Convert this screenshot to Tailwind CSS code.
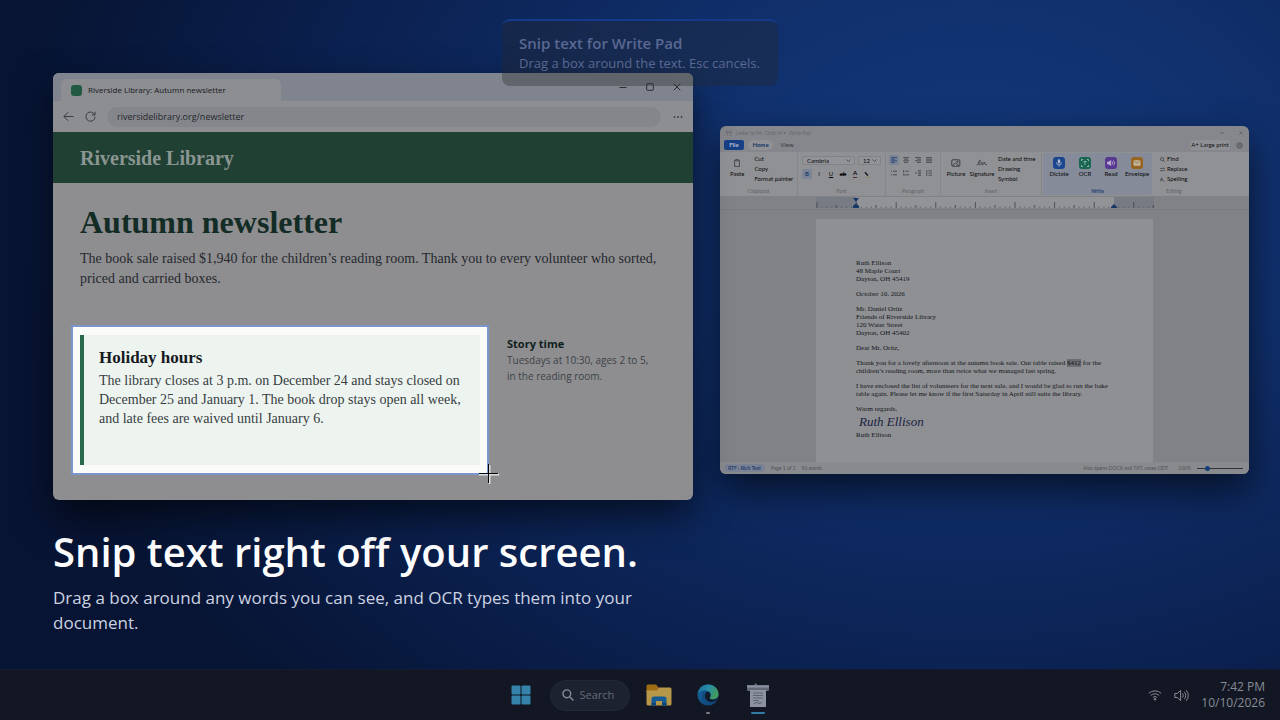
<!DOCTYPE html>
<html lang="en">
  <head>
    <meta charset="UTF-8" />
    <meta name="viewport" content="width=device-width, initial-scale=1.0" />
    <title>Write Pad - Snip text</title>
    <script src="https://cdn.jsdelivr.net/npm/@tailwindcss/browser@4"></script>
  </head>
  <body class="relative flex min-h-screen flex-col overflow-x-hidden bg-[#0a1e4c] bg-[radial-gradient(ellipse_75%_100%_at_76%_28%,#12387a_0%,#102f6b_35%,#0b2150_68%,#071433_100%)] font-['Open_Sans',sans-serif]">
    <main class="flex flex-1 items-start gap-[27px] pt-[73px] pr-[31px] pl-[53px]">
      <div class="w-[50vw] shrink-0">
        <!-- browser -->
        <section class="relative overflow-hidden rounded-md bg-[#8e8e90] shadow-[0_16px_36px_rgba(0,0,0,0.6)]" aria-label="Browser">
          <div class="flex h-7 items-end bg-[#80848e] pl-2">
            <div class="flex h-[22px] w-[220px] items-center gap-1.5 rounded-t-md bg-[#8d8e91] pl-[10px]">
              <span class="size-[11px] rounded-[3px] bg-[#225a41]"></span>
              <span class="text-[8px] text-[#17191e]">Riverside Library: Autumn newsletter</span>
            </div>
            <div class="mr-3 mb-[10px] ml-auto flex items-center gap-[19px] text-[#2a2d34]">
              <button aria-label="Minimize"><svg class="size-2" viewBox="0 0 8 8" fill="none" stroke="currentColor"><path d="M.5 4.5h7" /></svg></button>
              <button aria-label="Maximize"><svg class="size-2" viewBox="0 0 8 8" fill="none" stroke="currentColor"><rect x=".7" y=".7" width="6.6" height="6.6" rx=".8" /></svg></button>
              <button aria-label="Close"><svg class="size-2" viewBox="0 0 8 8" fill="none" stroke="currentColor"><path d="M.7.7l6.6 6.6M7.3.7L.7 7.3" /></svg></button>
            </div>
          </div>
          <div class="flex h-[31px] items-center bg-[#8d8e91] pr-[10px] pl-[10px] text-[#3a3d43]">
            <button aria-label="Back"><svg class="size-[11px]" viewBox="0 0 11 11" fill="none" stroke="currentColor"><path d="M10.500 5.500H1M5 1.300L.9 5.500 5 9.700" /></svg></button>
            <button class="ml-[11px]" aria-label="Reload"><svg class="size-[11px]" viewBox="0 0 11 11" fill="none" stroke="currentColor"><path d="M9.800 4A4.600 4.600 0 1 0 10.100 5.800M10 .8V4H6.800" /></svg></button>
            <input class="ml-[11px] h-5 min-w-0 flex-1 rounded-full bg-[#85868b] px-[10px] text-[9px] text-[#24262c] outline-none" aria-label="Address" value="riversidelibrary.org/newsletter" />
            <button class="ml-3" aria-label="More"><svg class="h-2 w-[10px]" viewBox="0 0 10 8" fill="currentColor"><circle cx="1.500" cy="4" r=".9" /><circle cx="5" cy="4" r=".9" /><circle cx="8.500" cy="4" r=".9" /></svg></button>
          </div>
          <header class="flex h-[51px] items-center bg-[#1f4033] pl-[27px] font-['Liberation_Serif',serif] text-[20px] font-bold text-[#8b9592]">Riverside Library</header>
          <div class="px-[27px] pt-[19px] pb-[35px] font-['Liberation_Serif',serif] text-[#25282d]">
            <h1 class="text-[32px] leading-10 font-bold text-[#132c25]">Autumn newsletter</h1>
            <p class="mt-[7px] text-[14px] leading-5">The book sale raised $1,940 for the children’s reading room. Thank you to every volunteer who sorted, priced and carried boxes.</p>
            <div class="mt-[46px] flex gap-[27px]">
              <!-- snipped area -->
              <div class="relative h-[130px] w-[400px] shrink-0">
                <div class="absolute -inset-x-[9px] -inset-y-[10px] border-2 border-[#7c95cf] bg-[#fbfcfa]"></div>
                <div class="relative h-full border-l-4 border-[#2a6949] bg-[#edf4f0] pt-3 pl-[15px]">
                  <h2 class="text-[17px] leading-[22px] font-bold text-[#16191d]">Holiday hours</h2>
                  <p class="pt-0.5 text-[14px] leading-[19px] text-[#383d42]">The library closes at 3 p.m. on December 24 and stays closed on December 25 and January 1. The book drop stays open all week, and late fees are waived until January 6.</p>
                </div>
                <svg class="absolute -right-[19px] -bottom-[19px] size-5" viewBox="0 0 20 20" fill="none"><path d="M0 10.500h20M10.500 1v19" stroke="#fff" stroke-width="2" opacity=".7" /><path d="M0 9.500h19M9.500 0v19" stroke="#000" /></svg>
              </div>
              <aside class="font-['Open_Sans',sans-serif] text-[10px] leading-4 whitespace-nowrap text-[#3d4147]">
                <h3 class="text-[11px] leading-[17px] font-bold text-[#101f1c]">Story time</h3>
                <p>Tuesdays at 10:30, ages 2 to 5,<br />in the reading room.</p>
              </aside>
            </div>
          </div>
        </section>

        <h2 class="mt-6 text-[40px] leading-[56px] font-semibold whitespace-nowrap text-white">Snip text right off your screen.</h2>
        <p class="mt-[5px] text-[17px] leading-[25px] text-[#cdd3e2]">Drag a box around any words you can see, and OCR types them into your document.</p>
      </div>

      <!-- write pad -->
      <section class="mt-[53px] min-w-0 flex-1 overflow-hidden rounded-md bg-[#86878c] font-['Lato',sans-serif] text-[6px] leading-[10px] text-[#15171b] shadow-[0_16px_36px_rgba(0,0,0,0.6)]" aria-label="Write Pad">
        <div class="flex h-[13px] items-center pr-[6px] pl-[6px] text-[5px] text-[#66686d]">
          <svg class="mr-1 size-1.5" viewBox="0 0 6 6" fill="none" stroke="currentColor" stroke-width=".6"><path d="M0 1h6v1.500H0zM1.200 2.500h3.600V6H1.200z" /></svg>
          <span>Letter to Mr. Ortiz.rtf •&nbsp; Write Pad</span>
          <button class="ml-auto" aria-label="Minimize"><svg class="size-1" viewBox="0 0 4 4" stroke="#55575c" stroke-width=".7"><path d="M0 2h4" /></svg></button>
          <button class="ml-[15px]" aria-label="Close"><svg class="size-1" viewBox="0 0 4 4" stroke="#55575c" stroke-width=".6"><path d="M.2.2l3.600 3.600M3.800.2L.2 3.800" /></svg></button>
        </div>
        <div class="flex h-[13px] items-center pb-px pl-1 text-[#33363c]">
          <button class="h-[10px] w-5 rounded-[2px] bg-[#163f86] font-bold text-[#b4bdcf]">File</button>
          <button class="ml-1 h-[10px] w-[25px] rounded-full bg-[#909195] font-bold text-[#173767]">Home</button>
          <button class="ml-1 h-[10px] w-[20px]">View</button>
          <button class="ml-auto h-[10px] w-10 rounded-[3px] bg-[#8f9094] text-[#101216]">A+ Large print</button>
          <button class="mx-[6px]" aria-label="Settings"><svg class="size-[7px]" viewBox="0 0 7 7" fill="none" stroke="#33363b" stroke-width=".6"><circle cx="3.500" cy="3.500" r="1.100" /><circle cx="3.500" cy="3.500" r="2.700" /></svg></button>
        </div>

        <div class="flex h-11 bg-[#909194] text-[#08090c]">
          <div class="relative flex w-[78px] border-r border-[#85868a] pt-[2px] pl-[10px]">
            <button class="flex flex-col items-center pt-[5px]"><svg class="size-2" viewBox="0 0 8 8" fill="none" stroke="#34373c" stroke-width=".8"><path d="M2.800 1.200H1.600v6.400h4.800V1.200H5.200" /><rect x="2.800" y=".4" width="2.400" height="1.500" rx=".5" /></svg><span class="mt-0.5">Paste</span></button>
            <div class="ml-[10px] flex flex-col items-start whitespace-nowrap"><button>Cut</button><button>Copy</button><button>Format painter</button></div>
            <span class="absolute inset-x-0 bottom-0 text-center text-[5px] text-[#5f6166]">Clipboard</span>
          </div>
          <div class="relative w-[88px] border-r border-[#85868a] pt-1 pl-1">
            <div class="flex gap-[3px]">
              <label class="relative"><select class="block h-[9px] w-[53px] appearance-none rounded-[1px] border border-[#808287] bg-[#929396] pl-1 leading-[7px]" aria-label="Font"><option>Cambria</option></select><svg class="absolute top-[3px] right-1 h-[3px] w-[5px]" viewBox="0 0 5 3" fill="none" stroke="#34373c" stroke-width=".7"><path d="M.5.5l2 2 2-2" /></svg></label>
              <label class="relative"><select class="block h-[9px] w-[23px] appearance-none rounded-[1px] border border-[#808287] bg-[#929396] pl-1 leading-[7px]" aria-label="Font size"><option>12</option></select><svg class="absolute top-[3px] right-1 h-[3px] w-[5px]" viewBox="0 0 5 3" fill="none" stroke="#34373c" stroke-width=".7"><path d="M.5.5l2 2 2-2" /></svg></label>
            </div>
            <div class="mt-1 flex gap-[2px]">
              <button class="h-[10px] w-[10px] rounded-[2px] bg-[#7b8497] font-bold text-[#173767]">B</button>
              <button class="h-[10px] w-[10px] italic">I</button>
              <button class="h-[10px] w-[10px] underline">U</button>
              <button class="h-[10px] w-[10px] font-bold line-through">ab</button>
              <button class="flex h-[10px] w-[10px] justify-center" aria-label="Text color"><span class="h-[9px] border-b border-[#5d2629] leading-2 font-bold">A</span></button>
              <button class="h-[10px] w-[10px]" aria-label="Highlight"><svg class="mx-auto h-[7px] w-[6px]" viewBox="0 0 6 7"><path d="M1 .5l3.500 3.500-1.200 1L.6 2z" fill="#15171b" /><path d="M3 6.400h3" stroke="#8d8747" /></svg></button>
            </div>
            <span class="absolute inset-x-0 bottom-0 text-center text-[5px] text-[#5f6166]">Font</span>
          </div>
          <div class="relative w-[55px] border-r border-[#85868a] pt-[3px] pl-[3px]">
            <div class="grid w-[47px] grid-cols-4 gap-y-[3px] text-[#33363c]">
              <button class="flex size-[10px] items-center justify-center rounded-[2px] bg-[#7b8497] text-[#173767]" aria-label="Align left"><svg class="size-1.5" viewBox="0 0 6 6" stroke="currentColor" stroke-width=".7"><path d="M0 .6h6M0 2.200h4M0 3.800h6M0 5.400h4" /></svg></button>
              <button class="flex size-[10px] items-center justify-center" aria-label="Center"><svg class="size-1.5" viewBox="0 0 6 6" stroke="currentColor" stroke-width=".7"><path d="M0 .6h6M1 2.200h4M0 3.800h6M1 5.400h4" /></svg></button>
              <button class="flex size-[10px] items-center justify-center" aria-label="Align right"><svg class="size-1.5" viewBox="0 0 6 6" stroke="currentColor" stroke-width=".7"><path d="M0 .6h6M2 2.200h4M0 3.800h6M2 5.400h4" /></svg></button>
              <button class="flex size-[10px] items-center justify-center" aria-label="Justify"><svg class="size-1.5" viewBox="0 0 6 6" stroke="currentColor" stroke-width=".7"><path d="M0 .6h6M0 2.200h6M0 3.800h6M0 5.400h6" /></svg></button>
              <button class="flex size-[10px] items-center justify-center" aria-label="Bullets"><svg class="size-1.5" viewBox="0 0 6 6" stroke="currentColor" stroke-width=".8"><path d="M0 1.200h1M0 4.800h1M2 1.200h4M2 4.800h4" /></svg></button>
              <button class="flex size-[10px] items-center justify-center" aria-label="Numbering"><svg class="size-1.5" viewBox="0 0 6 6" stroke="currentColor" stroke-width=".7"><path d="M.6 0v2.300M0 4h1v2M2.200 1.200H6M2.200 4.800H6" fill="none" /></svg></button>
              <button class="flex size-[10px] items-center justify-center" aria-label="Decrease indent"><svg class="size-1.5" viewBox="0 0 6 6" stroke="currentColor" stroke-width=".7"><path d="M0 3h2M3 .6h3M3 2.200h3M3 3.800h3M3 5.400h3" /></svg></button>
              <button class="flex size-[10px] items-center justify-center" aria-label="Line spacing"><svg class="size-1.5" viewBox="0 0 6 6" stroke="currentColor" stroke-width=".7"><path d="M.8 0v6M2.400.8H6M2.400 3H6M2.400 5.200H6" /></svg></button>
            </div>
            <span class="absolute inset-x-0 bottom-0 text-center text-[5px] text-[#5f6166]">Paragraph</span>
          </div>
          <div class="relative flex w-[101px] border-r border-[#85868a] pt-[2px] pl-[6px]">
            <button class="flex w-[18px] flex-col items-center pt-[5px]"><svg class="h-2 w-[10px]" viewBox="0 0 10 8" fill="none" stroke="#25282d" stroke-width=".8"><rect x=".8" y=".8" width="8" height="6.400" rx=".8" /><path d="M1.500 6.800l3-3 3.500 3.200" /><circle cx="6.500" cy="2.800" r=".6" /></svg><span class="mt-0.5">Picture</span></button>
            <button class="ml-1 flex w-[26px] flex-col items-center pt-[5px]"><svg class="h-2 w-3" viewBox="0 0 12 8" fill="none" stroke="#34373c" stroke-width=".8"><path d="M.5 6C3 5 5 1 4 1S2 6 3.500 6s2-3 2.500-3-.5 3 .5 3 1.500-3 2-3 0 2.500 1 2.500h1.500" /></svg><span class="mt-0.5">Signature</span></button>
            <div class="ml-[3px] flex flex-col items-start whitespace-nowrap"><button>Date and time</button><button>Drawing</button><button>Symbol</button></div>
            <span class="absolute inset-x-0 bottom-0 text-center text-[5px] text-[#5f6166]">Insert</span>
          </div>
          <div class="relative my-[1px] ml-px flex w-[109px] rounded-[2px] bg-[#858b99] pt-1 pl-[3px]">
            <button class="flex w-[26px] flex-col items-center"><svg class="size-3" viewBox="0 0 12 12" fill="none" stroke="#b1bccf" stroke-width=".8"><rect width="12" height="12" rx="3" fill="#1a458f" stroke="none" /><rect x="4.800" y="2.200" width="2.400" height="4.300" rx="1.200" fill="#b1bccf" stroke="none" /><path d="M3.500 5.500a2.500 2.500 0 0 0 5 0M6 8v1.800" /></svg><span>Dictate</span></button>
            <button class="flex w-[26px] flex-col items-center"><svg class="size-3" viewBox="0 0 12 12" fill="none" stroke="#a6c4bc" stroke-width=".8"><rect width="12" height="12" rx="3" fill="#1a6652" stroke="none" /><path d="M2.500 4V2.500H4M8 2.500h1.500V4M9.500 8v1.500H8M4 9.500H2.500V8M4.500 4.500h3M6 4.500v3.300" /></svg><span>OCR</span></button>
            <button class="flex w-[26px] flex-col items-center"><svg class="size-3" viewBox="0 0 12 12" fill="none" stroke="#bfb0d4" stroke-width=".8"><rect width="12" height="12" rx="3" fill="#573891" stroke="none" /><path d="M2.500 5v2h1.300L5.700 8.500v-5L3.800 5z" fill="#bfb0d4" /><path d="M7 4.600a2 2 0 0 1 0 2.800M8.400 3.500a3.500 3.500 0 0 1 0 5" /></svg><span>Read</span></button>
            <button class="flex w-[26px] flex-col items-center"><svg class="size-3" viewBox="0 0 12 12" fill="none"><rect width="12" height="12" rx="3" fill="#976520" /><rect x="2.500" y="3.300" width="7" height="5.400" rx=".6" fill="#c0b69e" /><path d="M2.700 3.800L6 6.300l3.300-2.500" stroke="#976520" stroke-width=".7" /></svg><span>Envelope</span></button>
            <span class="absolute inset-x-0 -bottom-px text-center text-[5px] font-bold text-[#263f70]">Write</span>
          </div>
          <div class="relative flex w-11 flex-col items-start pt-[2px] pl-2">
            <button class="flex items-center gap-[2px]"><svg class="size-[5px]" viewBox="0 0 5 5" fill="none" stroke="#34373c" stroke-width=".6"><circle cx="2" cy="2" r="1.600" /><path d="M3.200 3.200L5 5" /></svg>Find</button>
            <button class="flex items-center gap-[2px]"><svg class="size-[5px]" viewBox="0 0 5 5" fill="none" stroke="#34373c" stroke-width=".6"><path d="M0 1.500h4.500l-1-1M5 3.500H.5l1 1" /></svg>Replace</button>
            <button class="flex items-center gap-[2px]"><svg class="size-[5px]" viewBox="0 0 5 5" fill="none" stroke="#34373c" stroke-width=".6"><path d="M.3 4.200L1.600.8 3 4.200M.8 3h1.700M3.500 4l1 .5" /></svg>Spelling</button>
            <span class="absolute inset-x-0 bottom-0 text-center text-[5px] text-[#5f6166]">Editing</span>
          </div>
        </div>

        <div class="flex h-[14px] justify-center border-b border-[#7a7b80] bg-[#818286]">
          <svg class="h-[13px] w-[338px]" viewBox="0 0 338 13">
            <defs>
              <pattern id="ticks" width="39.6" height="13" x="0.500" patternUnits="userSpaceOnUse"><path d="M.4 6v6M20 9v3" stroke="#33363b" stroke-width=".8" /><path d="M5.300 10.500v1.500M10.200 10.500v1.500M15.100 10.500v1.500M25 10.500v1.500M30 10.500v1.500M35 10.500v1.500" stroke="#4a4d52" stroke-width=".7" /></pattern>
            </defs>
            <path d="M0 1h338v11H0z" fill="#777b84" />
            <path d="M40 1h258v11H40z" fill="#929397" />
            <path d="M0 0h338v12H0z" fill="url(#ticks)" />
            <path d="M37 2h6l-3 4zM37 12h6v-2l-3-3-3 3zM295 12h6v-1l-3-3-3 3z" fill="#173767" />
          </svg>
        </div>

        <div class="flex h-[252px] justify-center bg-[#808287] pt-[9px]">
          <article class="w-[337px] bg-[#8f9094] pt-10 pl-10 font-['Liberation_Serif',serif] text-[7px] leading-2 whitespace-nowrap text-[#14161a]">
            <p>Ruth Ellison<br />48 Maple Court<br />Dayton, OH 45419</p>
            <p class="mt-[7px]">October 10, 2026</p>
            <p class="mt-[7px]">Mr. Daniel Ortiz<br />Friends of Riverside Library<br />120 Water Street<br />Dayton, OH 45402</p>
            <p class="mt-[7px]">Dear Mr. Ortiz,</p>
            <p class="mt-[7px]">Thank you for a lovely afternoon at the autumn book sale. Our table raised <mark class="bg-[#6a6c71] text-[#14161a]">$412</mark> for the<br />children’s reading room, more than twice what we managed last spring.</p>
            <p class="mt-[7px]">I have enclosed the list of volunteers for the next sale, and I would be glad to run the bake<br />table again. Please let me know if the first Saturday in April still suits the library.</p>
            <p class="mt-[7px]">Warm regards,</p>
            <p class="pl-[3px] text-[13px] leading-[18px] text-[#1a2142] italic">Ruth Ellison</p>
            <p>Ruth Ellison</p>
          </article>
        </div>
        <footer class="flex h-3 items-center bg-[#898a8e] pr-[6px] pl-1 text-[5px] text-[#505257]">
          <span class="rounded-full bg-[#7b8294] px-1 leading-2 font-bold text-[#263f70]">RTF · Rich Text</span>
          <span class="ml-[6px]">Page 1 of 1</span>
          <span class="ml-[6px]">90 words</span>
          <span class="ml-auto">Also opens DOCX and TXT, saves ODT</span>
          <span class="mx-[6px] ml-[10px]">100%</span>
          <input type="range" min="10" max="500" value="110" aria-label="Zoom" class="h-1.5 w-[46px] appearance-none bg-[linear-gradient(#303338,#303338)] bg-[length:100%_1px] bg-center bg-no-repeat [&::-webkit-slider-thumb]:size-[5px] [&::-webkit-slider-thumb]:appearance-none [&::-webkit-slider-thumb]:rounded-full [&::-webkit-slider-thumb]:bg-[#163f78]" />
        </footer>
      </section>
    </main>

    <!-- snip hint, fading out -->
    <div role="status" class="absolute top-[19px] left-1/2 w-[276px] -translate-x-1/2 rounded-lg border-t-2 border-[#153a8c] bg-[#25272c]/35 px-[17px] pt-3 pb-3 text-[#5a6893]">
      <p class="text-[15px] leading-5 font-semibold">Snip text for Write Pad</p>
      <p class="text-[13px] leading-[21px] whitespace-nowrap">Drag a box around the text. Esc cancels.</p>
    </div>

    <nav class="grid h-[51px] grid-cols-[1fr_auto_1fr] items-center border-t border-[#141b30] bg-[#121723]" aria-label="Taskbar">
      <div class="col-start-2 flex items-center">
        <button aria-label="Start"><svg class="size-5" viewBox="0 0 20 20" fill="#3583ab"><rect x=".5" y=".5" width="9" height="9" rx="1" /><rect x="10.500" y=".5" width="9" height="9" rx="1" /><rect x=".5" y="10.500" width="9" height="9" rx="1" /><rect x="10.500" y="10.500" width="9" height="9" rx="1" /></svg></button>
        <label class="ml-[19px] flex h-[31px] w-20 items-center gap-[6px] rounded-full border border-[#232936] bg-[#1c222f] pl-[11px]">
          <svg class="size-3 shrink-0" viewBox="0 0 12 12" fill="none" stroke="#888d98" stroke-width="1.400"><circle cx="4.800" cy="4.800" r="3.900" /><path d="M7.700 7.700l3.800 3.800" /></svg>
          <input class="w-full min-w-0 bg-transparent text-[11px] outline-none placeholder:text-[#666b77]" placeholder="Search" aria-label="Search" />
        </label>
        <button class="ml-4" aria-label="File Explorer"><svg class="h-[22px] w-[26px]" viewBox="0 0 26 22"><path d="M.5 2Q.5.5 2 .5h8l2.500 3V8H.5z" fill="#a06c13" /><path d="M.5 6.500h10L13 3.500h11q1.500 0 1.500 1.500v15q0 1.500-1.500 1.500H2Q.5 21.500.5 20z" fill="#b79748" /><path d="M5.500 21.500V15q0-2.500 2.500-2.500h10q2.500 0 2.500 2.500v6.500h-4.500V17h-6v4.500z" fill="#155b96" /><path d="M5.500 21.500V19H10v2.500zM16 21.500V19h4.500v2.500z" fill="#0f4475" /></svg></button>
        <button class="relative ml-[25px]" aria-label="Edge">
          <svg class="size-[22px]" viewBox="0 0 24 24">
            <defs>
              <linearGradient id="edgeTop" x1="0" y1="0" x2="1" y2=".4"><stop stop-color="#1a6a9b" /><stop offset=".5" stop-color="#268ca8" /><stop offset="1" stop-color="#419b5d" /></linearGradient>
              <linearGradient id="edgeLow" x1="0" y1="0" x2="1" y2="1"><stop stop-color="#1767a1" /><stop offset="1" stop-color="#0e3e73" /></linearGradient>
            </defs>
            <circle cx="12" cy="12" r="11.500" fill="url(#edgeLow)" />
            <path d="M.7 10.500C2 4 6.500.5 12 .5c7 0 11.500 5 11.500 10.500 0 4-3 6-6 6-2.500 0-4-1-3.500-2 1.500-1.700 1.500-5-.5-6.500C9.500 5.500 3 6.500.7 10.500z" fill="url(#edgeTop)" />
            <path d="M8.500 12.500c0-3 2-4.500 4-4 2.500 1 2.700 4.500 1.500 6.500-.5 1 1 2 3.500 2 1.700 0 3.300-.6 4.300-1.600l.7.500C20 20 14 20.500 11 18.500c-1.700-1.300-2.500-3.500-2.500-6z" fill="#101b2b" />
            <path d="M5.500 13c0-4 3-6 6-5-2 .5-3 2.500-3 4.500 0 5 4 8 9 7.500C11 24 5.500 19 5.500 13z" fill="#124d80" />
          </svg>
          <span class="absolute top-[28px] left-[9px] h-0.5 w-1 rounded bg-[#777b84]"></span>
        </button>
        <button class="relative ml-[27px]" aria-label="Write Pad">
          <svg class="size-6" viewBox="0 0 24 24"><path d="M8 2.500L10 0l1 2.500z" fill="#80848f" /><rect x="1" y="2" width="22" height="6" rx="1" fill="#626878" /><path d="M1 2.500h22v2H1z" fill="#8c92a0" /><path d="M4 7h16v17H4z" fill="#8d929e" /><path d="M7 10h10M7 12.500h10M7 15h10M7 17.500h6" stroke="#525866" stroke-width=".8" /><path d="M8 21c2-2 3-2 4-1s3 0 4-1" stroke="#525866" fill="none" /></svg>
          <span class="absolute top-[29px] left-[5px] h-0.5 w-[14px] rounded bg-[#317ba4]"></span>
        </button>
      </div>
      <div class="flex items-center justify-end pr-[15px] text-[#888c96]">
        <svg class="h-3 w-[14px]" viewBox="0 0 14 12" fill="none" stroke="currentColor"><path d="M.8 4.400a8.800 8.800 0 0 1 12.400 0M2.800 6.500a6 6 0 0 1 8.400 0M4.800 8.500a3.200 3.200 0 0 1 4.400 0" /><circle cx="7" cy="10.300" r=".8" fill="currentColor" /></svg>
        <svg class="mr-3 ml-3 h-[13px] w-[15px]" viewBox="0 0 15 13" fill="none" stroke="currentColor"><path d="M.8 4.500v4h2.400L6.600 11.500v-10L3.200 4.500z" /><path d="M8.500 4.500a3 3 0 0 1 0 4M10.300 3a5 5 0 0 1 0 7M12.100 1.200a7.500 7.500 0 0 1 0 10.600" /></svg>
        <time class="text-right text-[12px] leading-4">7:42 PM<br />10/10/2026</time>
      </div>
    </nav>
  </body>
</html>
